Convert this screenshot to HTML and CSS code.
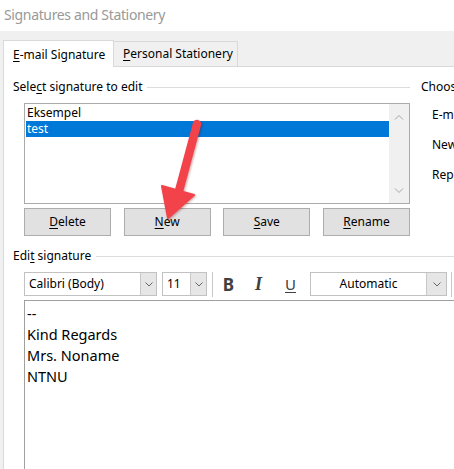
FILE: index.html
```html
<!doctype html>
<html>
	<head>
		<meta charset="utf-8">
		<title>Signatures and Stationery</title>
		<link rel="stylesheet" href="styles.css">
	</head>
	<body>
		<div class="titlebar">Signatures and Stationery</div>
		<div class="dialog">
			<div class="tabs">
				<div class="tab tab-active"><u>E</u>-mail Signature</div>
				<div class="tab"><u>P</u>ersonal Stationery</div>
			</div>
			<div class="panel">
				<div class="top">
					<div class="pick">
						<div class="legend"><span>Sele<u>c</u>t signature to edit</span><i class="rule"></i></div>
						<div class="listbox">
							<ul class="items">
								<li class="item">Eksempel</li>
								<li class="item selected">test</li>
							</ul>
							<div class="scroll">
								<svg width="10" height="6" viewBox="0 0 10 6"><path d="M1 5.5 L5 1.5 L9 5.5" fill="none" stroke="#a6a6a6" stroke-width="1"/></svg>
								<svg width="10" height="6" viewBox="0 0 10 6"><path d="M1 0.5 L5 4.5 L9 0.5" fill="none" stroke="#a6a6a6" stroke-width="1"/></svg>
							</div>
						</div>
						<div class="buttons">
							<div class="btn"><u>D</u>elete</div>
							<div class="btn"><u>N</u>ew</div>
							<div class="btn"><u>S</u>ave</div>
							<div class="btn"><u>R</u>ename</div>
						</div>
					</div>
					<!-- the dialog is cropped at the right edge, only the start of this column shows -->
					<div class="defaults">
						<div class="legend">Choos</div>
						<div class="field">E-m</div>
						<div class="field">New</div>
						<div class="field">Rep</div>
					</div>
				</div>

				<div class="legend legend-edit"><span>Edi<u>t</u> signature</span><i class="rule"></i></div>
				<div class="toolbar">
					<div class="combo combo-font">
						<span class="combo-text">Calibri (Body)</span>
						<span class="drop"><svg width="8" height="5" viewBox="0 0 8 5"><path d="M0.5 0.5 L4 4 L7.5 0.5" fill="none" stroke="#666" stroke-width="1"/></svg></span>
					</div>
					<div class="combo combo-size">
						<span class="combo-text">11</span>
						<span class="drop"><svg width="8" height="5" viewBox="0 0 8 5"><path d="M0.5 0.5 L4 4 L7.5 0.5" fill="none" stroke="#666" stroke-width="1"/></svg></span>
					</div>
					<i class="sep"></i>
					<div class="fmt fmt-b">B</div>
					<div class="fmt fmt-i">I</div>
					<div class="fmt fmt-u">U</div>
					<div class="combo combo-color">
						<span class="combo-text">Automatic</span>
						<span class="drop"><svg width="8" height="5" viewBox="0 0 8 5"><path d="M0.5 0.5 L4 4 L7.5 0.5" fill="none" stroke="#666" stroke-width="1"/></svg></span>
					</div>
					<i class="sep"></i>
				</div>
				<div class="editor">
					<div>--</div>
					<div>Kind Regards</div>
					<div>Mrs. Noname</div>
					<div>NTNU</div>
				</div>
			</div>
		</div>

		<!-- red arrow pointing at the New button -->
		<svg class="arrow" width="454" height="469" viewBox="0 0 454 469">
			<line x1="197" y1="124" x2="179" y2="191" stroke="#f2424a" stroke-width="8.5" stroke-linecap="round"/>
			<polygon points="162,186 194,195 168,218" fill="#f2424a" stroke="#f2424a" stroke-width="2" stroke-linejoin="round"/>
		</svg>
	</body>
</html>
```

FILE: styles.css
```css
* { margin: 0; padding: 0; box-sizing: border-box; }
html, body { height: 100%; }
body {
	width: 454px;
	height: 469px;
	overflow: hidden;
	position: relative;
	font-family: "Noto Sans", "Open Sans", sans-serif;
	font-size: 12px;
	color: #000;
	background: #f0f0f0;
}
u { text-decoration: underline; text-underline-offset: 2px; }
ul { list-style: none; }

.titlebar {
	height: 31px;
	background: #fff;
	color: #999;
	font-size: 14px;
	line-height: 30px;
	padding-left: 4px;
	letter-spacing: -0.35px;
}

.dialog {
	width: 454px;
	height: 438px;
	overflow: hidden;
	padding: 9px 0 0 3px;
	display: flex;
	flex-direction: column;
}
.tabs { display: flex; height: 26px; align-items: flex-end; }
.tab {
	height: 25px;
	width: 124px;
	border: 1px solid #d9d9d9;
	border-left: none;
	border-bottom: none;
	background: #f0f0f0;
	padding-left: 9px;
	line-height: 24px;
	font-size: 12px;
}
.tab-active {
	height: 27px;
	width: 111px;
	border-left: 1px solid #d9d9d9;
	background: #fff;
	padding-left: 9px;
	margin-bottom: -1px;
	position: relative;
	line-height: 27px;
}

.panel {
	flex: 1;
	background: #fff;
	border-top: 1px solid #d9d9d9;
	border-left: 1px solid #d9d9d9;
	padding: 12px 0 0 9px;
	overflow: hidden;
}
.top { display: flex; }
.pick { width: 397px; flex-shrink: 0; }

.legend {
	display: flex;
	align-items: center;
	height: 16px;
	line-height: 16px;
	white-space: nowrap;
}
.rule {
	flex: 1;
	border-top: 1px solid #dcdcdc;
	margin-left: 5px;
}

.listbox {
	display: flex;
	margin: 8px 0 0 11px;
	width: 386px;
	height: 101px;
	border: 1px solid #ababab;
}
.items { flex: 1; padding: 1px 0 0 1px; }
.item {
	height: 16px;
	line-height: 16px;
	padding-left: 1px;
}
.selected { background: #0078d7; color: #fff; }
.scroll {
	width: 20px;
	background: #f0f0f0;
	display: flex;
	flex-direction: column;
	align-items: center;
	justify-content: space-between;
	padding: 10px 0 9px;
}

.buttons {
	display: flex;
	justify-content: space-between;
	width: 386px;
	margin: 4px 0 0 11px;
}
.btn {
	width: 87px;
	height: 28px;
	background: #e1e1e1;
	border: 1px solid #adadad;
	text-align: center;
	line-height: 26px;
}

.defaults { margin-left: 11px; white-space: nowrap; }
.field { margin: 9px 0 0 11px; height: 21px; line-height: 21px; }

.legend-edit { margin-top: 12px; }

.toolbar {
	display: flex;
	align-items: center;
	height: 24px;
	margin: 8px 0 0 11px;
}
.combo {
	display: flex;
	flex-shrink: 0;
	height: 24px;
	border: 1px solid #c2c2c2;
	background: #fff;
	font-size: 12px;
}
.combo-text { flex: 1; padding-left: 4px; line-height: 22px; }
.drop {
	width: 16px;
	background: #e6e6e6;
	border-left: 1px solid #c8c8c8;
	display: flex;
	align-items: center;
	justify-content: center;
}
.combo-font { width: 133px; }
.combo-size { width: 45px; margin-left: 5px; }
.combo-color { width: 137px; margin-left: 2px; }
.combo-color .combo-text { text-align: center; padding-left: 0; }
.combo-color .drop { width: 20px; }

.sep {
	width: 1px;
	height: 25px;
	background: #c8c8c8;
	margin-left: 5px;
	flex-shrink: 0;
}
.combo-color + .sep { margin-left: 4px; }

.fmt {
	text-align: center;
	font-size: 17px;
	color: #404040;
	font-weight: bold;
	flex-shrink: 0;
}
.fmt-b { width: 31px; }
.fmt-i { width: 29px; font-family: "Liberation Serif", serif; font-style: italic; font-size: 18px; }
.fmt-u { width: 35px; font-weight: normal; text-decoration: underline; text-underline-offset: 2px; font-size: 15px; }

.editor {
	margin: 4px 0 0 11px;
	height: 200px;
	border-top: 1px solid #a0a0a0;
	border-left: 1px solid #a0a0a0;
	padding: 2px 0 0 2px;
	font-size: 14.5px;
	line-height: 21px;
}

.arrow {
	position: absolute;
	left: 0;
	top: 0;
	pointer-events: none;
	filter: drop-shadow(1px 1px 1px rgba(120, 0, 0, 0.35));
}
```
